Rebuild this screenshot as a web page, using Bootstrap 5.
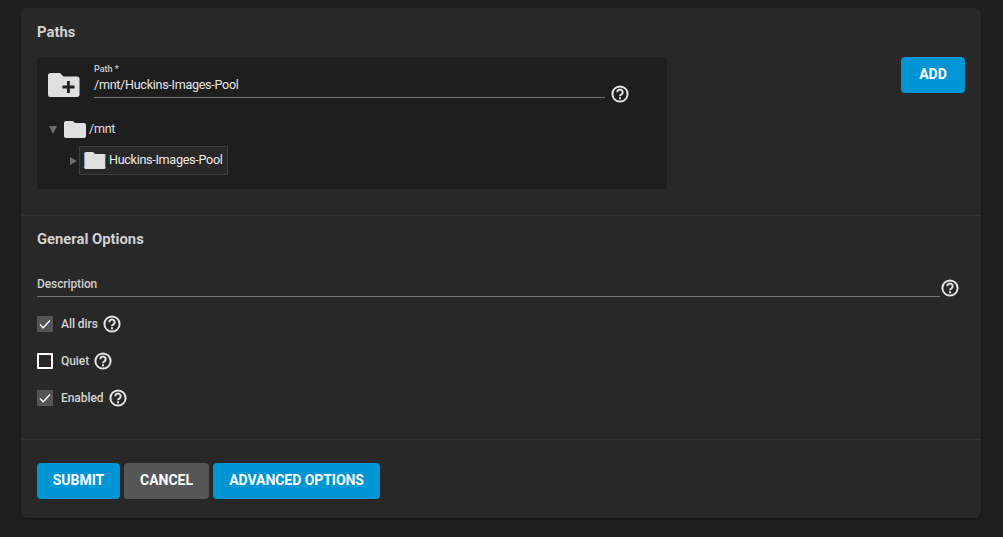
<!DOCTYPE html>
<html lang="en">
<head>
<meta charset="utf-8">
<title>Paths</title>
<link href="https://cdn.jsdelivr.net/npm/bootstrap@5.3.0/dist/css/bootstrap.min.css" rel="stylesheet">
<style>
html,body{height:537px;overflow:hidden}
body{background:#1e1e1e;font-family:Roboto,"Liberation Sans",sans-serif;color:#e0e0e0;padding:8px 22px 19px 21px}
.form-panel{background:#282828;border-radius:6px;height:510px;box-shadow:0 1px 2px rgba(0,0,0,.35)}
.sec-paths{height:208px;padding:16px 16px 0;border-bottom:1px solid #333}
.sec-general{height:224px;padding:15px 16px 0;border-bottom:1px solid #333}
.sec-actions{padding:23px 16px 0}
.sec-title{font-size:14.800px;font-weight:700;line-height:17px;color:#d2d2d2;margin:0}
.sec-paths .sec-title{margin-bottom:16px}
.explorer{width:630px;height:132px;background:#1e1e1e}
.path-row{height:51px;padding:5px 0 0 11px}
.folder-add{width:32px;height:26px;margin-top:10px;flex:none}
.path-field{width:511px;margin-left:14px;border-bottom:1px solid #777;height:36px}
.mini-label{font-size:9px;line-height:11px;color:#cfcfcf;font-weight:500;display:block;padding-top:2px}
.path-val{font-size:12.600px;line-height:17px;color:#e6e6e6;display:block;margin-top:1px;letter-spacing:-.3px;white-space:nowrap}
.help-ico{width:18px;height:18px;flex:none;display:block}
.path-help{margin:23px 0 0 6px}
.tree-a{height:21px;margin-top:11px;padding-left:12px;font-size:12.600px;color:#dedede;letter-spacing:-.3px}
.tree-label-a{margin-left:3px}
.caret-d{width:0;height:0;border-left:4px solid transparent;border-right:4px solid transparent;border-top:8px solid #6d6d6d;margin-right:7px}
.caret-r{width:0;height:0;border-top:4px solid transparent;border-bottom:4px solid transparent;border-left:7px solid #6d6d6d;margin-right:2px}
.folder-ico{width:22px;height:17px;flex:none}
.tree-b{margin-top:6px;padding-left:33px}
.node-sel{width:149px;height:29px;background:#282828;border:1px solid #3e3e3e;padding-left:4px;font-size:12.600px;color:#ececec;letter-spacing:-.3px;white-space:nowrap}
.node-label{margin-left:3px}
.tb-btn{background:#0095d5;color:#fff;border:0;border-radius:4px;font-family:Roboto,"Liberation Sans",sans-serif;font-size:14px;font-weight:700;height:36px;padding:0 16px 2px;line-height:34px}
.tb-btn:hover{background:#0095d5;color:#fff}
.tb-alt,.tb-alt:hover{background:#565656}
.add-btn{width:64px;padding:0 0 2px}
.submit-btn{width:83px;padding:0 0 2px}
.adv-btn{width:167px;padding:0 0 2px;letter-spacing:-.05px}
.desc-row{margin-top:21px;height:35px}
.desc-field{width:903px;height:28px;border-bottom:1px solid #777;font-size:12px;font-weight:500;color:#d0d0d0;line-height:17px;padding-top:7px;letter-spacing:-.1px}
.desc-help{margin:10px 0 0 1px}
.check-row{height:37px;font-size:12px;font-weight:500;color:#d4d4d4;letter-spacing:-.05px}
.check-list{margin-top:1px}
.box-on{width:16px;height:16px;background:#555;margin-right:8px;flex:none;display:block}
.box-off{width:16px;height:16px;border:2px solid #fff;border-radius:1px;margin-right:8px;flex:none;display:block}
.check-row .help-ico{margin-left:5px}
</style>
</head>
<body>
<form class="form-panel">
  <section class="sec-paths">
    <h2 class="sec-title">Paths</h2>
    <div class="d-flex justify-content-between">
      <div class="explorer">
        <div class="path-row d-flex">
          <svg class="folder-add" viewBox="0 0 32 26" aria-hidden="true"><path fill="#e0e0e0" d="M2.500 1H12l3.500 3.500H29A2.500 2.500 0 0 1 31.500 7V22.500A2.500 2.500 0 0 1 29 25H2.500A2.500 2.500 0 0 1 0 22.500V3.500A2.500 2.500 0 0 1 2.500 1Z"/><path fill="#1e1e1e" d="M19 9h2.800v4.600H26.500v2.800H21.800V21H19V16.400H14.500V13.600H19Z"/></svg>
          <div class="path-field">
            <span class="mini-label">Path *</span>
            <span class="path-val">/mnt/Huckins-Images-Pool</span>
          </div>
          <svg class="help-ico path-help" viewBox="0 0 18 18" aria-hidden="true"><circle cx="9" cy="9" r="7.600" fill="none" stroke="#e4e4e4" stroke-width="2"/><path d="M6.300 7.200A2.700 2.700 0 1 1 10.500 9.400C9.400 10 9 10.400 9 11.300" fill="none" stroke="#e4e4e4" stroke-width="2"/><rect x="8" y="12.300" width="2" height="2" fill="#e4e4e4"/></svg>
        </div>
        <div class="tree-a d-flex align-items-center">
          <span class="caret-d"></span>
          <svg class="folder-ico" viewBox="0 0 22 17" aria-hidden="true"><path fill="#e0e0e0" d="M2 0H9l2 2H20a2 2 0 0 1 2 2V15a2 2 0 0 1-2 2H2a2 2 0 0 1-2-2V2A2 2 0 0 1 2 0Z"/></svg>
          <span class="tree-label-a">/mnt</span>
        </div>
        <div class="tree-b d-flex align-items-center">
          <span class="caret-r"></span>
          <div class="node-sel d-flex align-items-center">
            <svg class="folder-ico" viewBox="0 0 22 17" aria-hidden="true"><path fill="#e0e0e0" d="M2 0H9l2 2H20a2 2 0 0 1 2 2V15a2 2 0 0 1-2 2H2a2 2 0 0 1-2-2V2A2 2 0 0 1 2 0Z"/><path fill="none" stroke="#a33" d="M21.500 3.500V15.500"/><path fill="none" stroke="#57a" stroke-width=".7" d="M.4 2V15"/></svg>
            <span class="node-label">Huckins-Images-Pool</span>
          </div>
        </div>
      </div>
      <button type="button" class="btn tb-btn add-btn">ADD</button>
    </div>
  </section>
  <section class="sec-general">
    <h2 class="sec-title">General Options</h2>
    <div class="desc-row d-flex">
      <div class="desc-field">Description</div>
      <svg class="help-ico desc-help" viewBox="0 0 18 18" aria-hidden="true"><circle cx="9" cy="9" r="7.600" fill="none" stroke="#e4e4e4" stroke-width="2"/><path d="M6.300 7.200A2.700 2.700 0 1 1 10.500 9.400C9.400 10 9 10.400 9 11.300" fill="none" stroke="#e4e4e4" stroke-width="2"/><rect x="8" y="12.300" width="2" height="2" fill="#e4e4e4"/></svg>
    </div>
    <div class="check-list">
      <div class="check-row d-flex align-items-center">
        <svg class="box-on" viewBox="0 0 16 16" aria-hidden="true"><path d="M3 8.500L6.200 11.700L13 4.500" fill="none" stroke="#fff" stroke-width="1.300"/></svg>
        <span>All dirs</span>
        <svg class="help-ico" viewBox="0 0 18 18" aria-hidden="true"><circle cx="9" cy="9" r="7.600" fill="none" stroke="#e4e4e4" stroke-width="2"/><path d="M6.300 7.200A2.700 2.700 0 1 1 10.500 9.400C9.400 10 9 10.400 9 11.300" fill="none" stroke="#e4e4e4" stroke-width="2"/><rect x="8" y="12.300" width="2" height="2" fill="#e4e4e4"/></svg>
      </div>
      <div class="check-row d-flex align-items-center">
        <span class="box-off"></span>
        <span>Quiet</span>
        <svg class="help-ico" viewBox="0 0 18 18" aria-hidden="true"><circle cx="9" cy="9" r="7.600" fill="none" stroke="#e4e4e4" stroke-width="2"/><path d="M6.300 7.200A2.700 2.700 0 1 1 10.500 9.400C9.400 10 9 10.400 9 11.300" fill="none" stroke="#e4e4e4" stroke-width="2"/><rect x="8" y="12.300" width="2" height="2" fill="#e4e4e4"/></svg>
      </div>
      <div class="check-row d-flex align-items-center">
        <svg class="box-on" viewBox="0 0 16 16" aria-hidden="true"><path d="M3 8.500L6.200 11.700L13 4.500" fill="none" stroke="#fff" stroke-width="1.300"/></svg>
        <span>Enabled</span>
        <svg class="help-ico" viewBox="0 0 18 18" aria-hidden="true"><circle cx="9" cy="9" r="7.600" fill="none" stroke="#e4e4e4" stroke-width="2"/><path d="M6.300 7.200A2.700 2.700 0 1 1 10.500 9.400C9.400 10 9 10.400 9 11.300" fill="none" stroke="#e4e4e4" stroke-width="2"/><rect x="8" y="12.300" width="2" height="2" fill="#e4e4e4"/></svg>
      </div>
    </div>
  </section>
  <section class="sec-actions d-flex gap-1">
    <button type="button" class="btn tb-btn submit-btn">SUBMIT</button>
    <button type="button" class="btn tb-btn tb-alt">CANCEL</button>
    <button type="button" class="btn tb-btn adv-btn">ADVANCED OPTIONS</button>
  </section>
</form>
<script src="https://cdn.jsdelivr.net/npm/bootstrap@5.3.0/dist/js/bootstrap.bundle.min.js"></script>
</body>
</html>
